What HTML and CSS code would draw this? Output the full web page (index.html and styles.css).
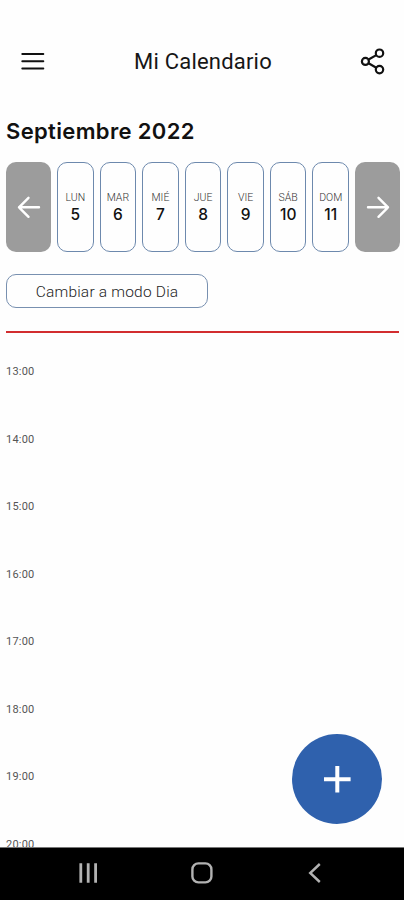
FILE: index.html
```html
<!DOCTYPE html>
<html lang="es">
<head>
<meta charset="utf-8">
<title>Mi Calendario</title>
<link rel="stylesheet" href="styles.css">
</head>
<body>
<div class="app">
  <header class="topbar">
    <svg class="icon" width="26" height="26" viewBox="0 0 26 26" fill="none" stroke="#111" stroke-width="2" stroke-linecap="round"><path d="M2.3 5H23.3M2.3 12.2H23.3M2.3 19.4H23.3"/></svg>
    <h1 class="title">Mi Calendario</h1>
    <svg class="icon" width="26" height="28" viewBox="0 0 26 28" fill="none" stroke="#111" stroke-width="2.2"><circle cx="5.4" cy="13.4" r="3.5"/><circle cx="19.5" cy="5.2" r="3.7"/><circle cx="19.5" cy="21.6" r="3.7"/><path d="M8.6 11.5L16.3 7.1M8.6 15.3L16.3 19.7"/></svg>
  </header>
  <h2 class="month">Septiembre 2022</h2>
  <div class="week">
    <button class="arrow" aria-label="Semana anterior"><svg width="24" height="24" viewBox="0 0 24 24" fill="none" stroke="#fff" stroke-width="2.4" stroke-linecap="round" stroke-linejoin="round"><path d="M22 12.3H2M11.5 2.8L2 12.3L11.5 21.8"/></svg></button>
    <div class="day"><span>LUN</span><b>5</b></div>
    <div class="day"><span>MAR</span><b>6</b></div>
    <div class="day"><span>MIÉ</span><b>7</b></div>
    <div class="day"><span>JUE</span><b>8</b></div>
    <div class="day"><span>VIE</span><b>9</b></div>
    <div class="day"><span>SÁB</span><b>10</b></div>
    <div class="day"><span>DOM</span><b>11</b></div>
    <button class="arrow" aria-label="Semana siguiente"><svg width="24" height="24" viewBox="0 0 24 24" fill="none" stroke="#fff" stroke-width="2.4" stroke-linecap="round" stroke-linejoin="round"><path d="M2 12.3H22M12.5 2.8L22 12.3L12.5 21.8"/></svg></button>
  </div>
  <button class="mode">Cambiar a modo Dia</button>
  <div class="now"></div>
  <div class="hours">
    <div class="hour">13:00</div>
    <div class="hour">14:00</div>
    <div class="hour">15:00</div>
    <div class="hour">16:00</div>
    <div class="hour">17:00</div>
    <div class="hour">18:00</div>
    <div class="hour">19:00</div>
    <div class="hour">20:00</div>
  </div>
  <button class="add" aria-label="Agregar"><svg width="28" height="28" viewBox="0 0 28 28" stroke="#fff" stroke-width="4"><path d="M14.3 1V27.6M1 14.3H27.6"/></svg></button>
  <nav class="navbar">
    <svg width="20" height="22" viewBox="0 0 20 22" stroke="#b2b2b2" stroke-width="2.8"><path d="M2.8 1.2V20.8M10.2 1.2V20.8M17.6 1.2V20.8"/></svg>
    <svg width="22" height="22" viewBox="0 0 22 22" fill="none" stroke="#b2b2b2" stroke-width="2.4"><rect x="1.4" y="1.4" width="19" height="19" rx="6"/></svg>
    <svg width="20" height="22" viewBox="0 0 20 22" fill="none" stroke="#b2b2b2" stroke-width="2.4"><path d="M14.8 2L5.2 11L14.8 20"/></svg>
  </nav>
</div>
</body>
</html>
```
FILE: styles.css
```css
* { box-sizing: border-box; }
body { margin: 0; background: #fefefe; font-family: Roboto, "Liberation Sans", sans-serif; color: #161616; }
button { font: inherit; color: inherit; padding: 0; border: 0; background: none; }
svg { display: block; }
.app { position: relative; width: 404px; height: 900px; overflow: hidden; display: flex; flex-direction: column; }
.topbar { height: 84px; margin-top: 20px; padding: 0 18px 0 20px; display: flex; align-items: center; justify-content: space-between; flex: none; }
.title { margin: 0; font-size: 22px; font-weight: 400; line-height: 28px; letter-spacing: 0.2px; }
.month { margin: 12px 0 0 6px; font: 600 22px/30px Inter, sans-serif; letter-spacing: 0.35px; color: #111; flex: none; white-space: nowrap; }
.week { display: flex; gap: 6px; height: 90px; margin: 16px 4px 0 6px; flex: none; }
.arrow { width: 45px; border-radius: 10px; background: #9c9c9c; display: flex; align-items: center; justify-content: center; flex: none; }
.day { flex: 1; min-width: 0; border: 1.5px solid #6d89ad; border-radius: 10px; display: flex; flex-direction: column; align-items: center; padding-top: 28px; }
.day span { font-size: 10.5px; line-height: 13px; font-weight: 300; color: #333; }
.day b { font: 500 15.5px/21px Inter, sans-serif; color: #111; }
.mode { width: 202px; height: 34px; margin: 22px 0 0 6px; border: 1.5px solid #7890b0; border-radius: 10px; font-size: 15.5px; font-weight: 300; letter-spacing: 0.2px; color: #222; padding-top: 1px; flex: none; }
.now { height: 2px; margin: 23px 5px 0 6px; background: #d22d2f; flex: none; }
.hours { height: 514px; padding: 32px 0 0 6px; overflow: hidden; flex: none; }
.hour { height: 67.5px; font-size: 11px; line-height: 14px; letter-spacing: 0.2px; color: #555; }
.add { position: absolute; left: 292px; top: 734px; width: 90px; height: 90px; border-radius: 50%; background: #2f61ad; display: flex; align-items: center; justify-content: center; }
.navbar { flex: 1; background: #000; border-top: 1px solid #777; padding: 0 79px 2px 78px; display: flex; align-items: center; justify-content: space-between; }
```
